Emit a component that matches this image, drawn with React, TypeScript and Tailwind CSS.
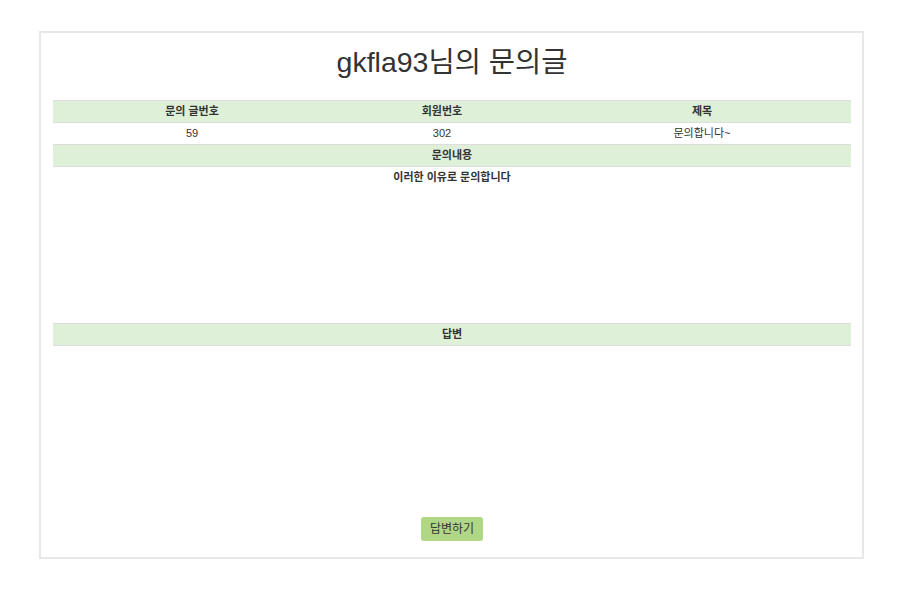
import React from 'react';

const font = { fontFamily: '"Liberation Sans", "Noto Sans CJK KR", sans-serif' };

export default function App() {
  return (
    <div className="min-h-screen bg-white pt-[31px] pb-[31px] text-[#333]" style={font}>
      <div className="mx-auto w-[825px] border-2 border-[#e8e8e8] pl-[12px] pr-[11px] pb-[16px]">
        <h2 className="pt-[11px] pb-[20px] text-center text-[28.5px] leading-[36px]">gkfla93님의 문의글</h2>

        <div className="text-[11px] leading-[21px]">
          {/* 기본 정보 */}
          <div className="flex h-[22px] border-t border-[#ddd] bg-[#dff0d8] font-bold">
            <div className="w-[278px] text-center">문의 글번호</div>
            <div className="w-[222px] text-center">회원번호</div>
            <div className="flex-1 text-center">제목</div>
          </div>
          <div className="flex h-[22px] border-t border-[#ddd]">
            <div className="w-[278px] text-center">59</div>
            <div className="w-[222px] text-center">302</div>
            <div className="flex-1 text-center">문의합니다~</div>
          </div>

          {/* 문의내용 */}
          <div className="h-[22px] border-t border-[#ddd] bg-[#dff0d8] text-center font-bold">문의내용</div>
          <div className="h-[157px] border-t border-[#ddd] text-center font-bold">이러한 이유로 문의합니다</div>

          {/* 답변 */}
          <div className="h-[23px] border-y border-[#ddd] bg-[#dff0d8] text-center font-bold">답변</div>
          <div className="h-[171px]" />
        </div>

        <div className="flex justify-center">
          <button className="h-[24px] w-[62px] rounded-[3px] bg-[#b0d786] text-[12px] text-[#333]">답변하기</button>
        </div>
      </div>
    </div>
  );
}
